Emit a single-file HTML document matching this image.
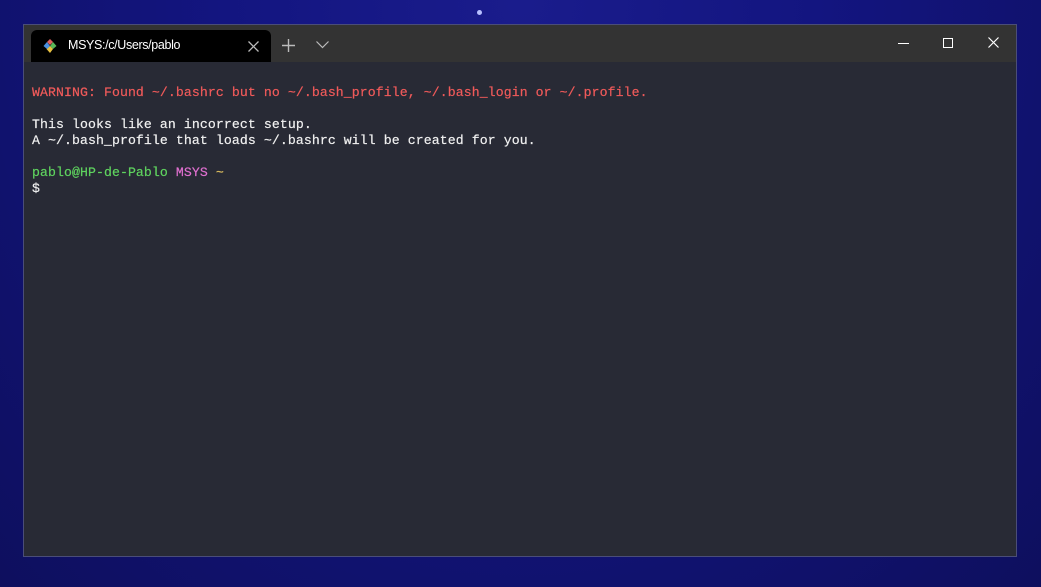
<!DOCTYPE html>
<html><head><meta charset="utf-8"><style>
html,body{margin:0;width:1041px;height:587px;overflow:hidden}
body{background:radial-gradient(ellipse at 50% 0%,#1a1c8c 0%,#131580 40%,#0e0f5e 100%);position:relative;font-family:"Liberation Sans",sans-serif}
.win{position:absolute;left:23px;top:24px;width:994px;height:533px;background:#282a35;border:1px solid #4a4d78;box-sizing:border-box}
.tb{position:absolute;left:0;top:0;right:0;height:37px;background:#333333}
.tab{position:absolute;left:7px;top:5px;width:240px;height:32px;background:#000;border-radius:6px 6px 0 0}
.tab .t{position:absolute;left:37px;top:8px;color:#fff;font-size:12.5px;letter-spacing:-0.35px}
.term{position:absolute;left:8px;top:60px;font-family:"Liberation Mono",monospace;font-size:13.17px;letter-spacing:0.1px;line-height:16px;color:#f0f0f0;white-space:pre;-webkit-text-stroke:0.2px currentColor}
.r{color:#f05a5a}.g{color:#5fd35f}.m{color:#e070d0}
</style></head><body>
<div class="win">
 <div class="tb">
  <div class="tab">
   <svg style="position:absolute;left:11px;top:8px" width="16" height="16" viewBox="0 0 16 16">
    <path d="M8 1L11 4 8 7 5 4Z" fill="#e06060"/><path d="M11 4L14.5 8 11 11 8 8Z" fill="#5ab85a"/><path d="M8 8L11 11 8 15 4.5 11Z" fill="#e8c040"/><path d="M1.5 8L5 4 8 8 5 11Z" fill="#4a90e0"/>
   </svg>
   <span class="t">MSYS:/c/Users/pablo</span>
   <svg style="position:absolute;left:217px;top:11px" width="11" height="11"><path d="M0.5 0.5L10.5 10.5M10.5 0.5L0.5 10.5" stroke="#bbb" stroke-width="1.3"/></svg>
  </div>
  <svg style="position:absolute;left:258px;top:14px" width="13" height="13"><path d="M6.5 0V13M0 6.5H13" stroke="#bbb" stroke-width="1.4"/></svg>
  <svg style="position:absolute;left:292px;top:16px" width="13" height="8"><path d="M0.5 0.5L6.5 6.5 12.5 0.5" stroke="#bbb" stroke-width="1.2" fill="none"/></svg>
  <div style="position:absolute;left:874px;top:18px;width:11px;height:1px;background:#fff"></div>
  <div style="position:absolute;left:919px;top:13px;width:8px;height:8px;border:1px solid #fff"></div>
  <svg style="position:absolute;left:964px;top:12px" width="11" height="11"><path d="M0.5 0.5L10.5 10.5M10.5 0.5L0.5 10.5" stroke="#fff" stroke-width="1.2"/></svg>
 </div>
 <div class="term"><span class="r">WARNING: Found ~/.bashrc but no ~/.bash_profile, ~/.bash_login or ~/.profile.</span>

This looks like an incorrect setup.
A ~/.bash_profile that loads ~/.bashrc will be created for you.

<span class="g">pablo@HP-de-Pablo</span> <span class="m">MSYS</span> <span style="color:#e0c060">~</span>
$</div>
</div>
<div style="position:absolute;left:477px;top:10px;width:5px;height:5px;border-radius:50%;background:#b8c0ff"></div>
</body></html>
